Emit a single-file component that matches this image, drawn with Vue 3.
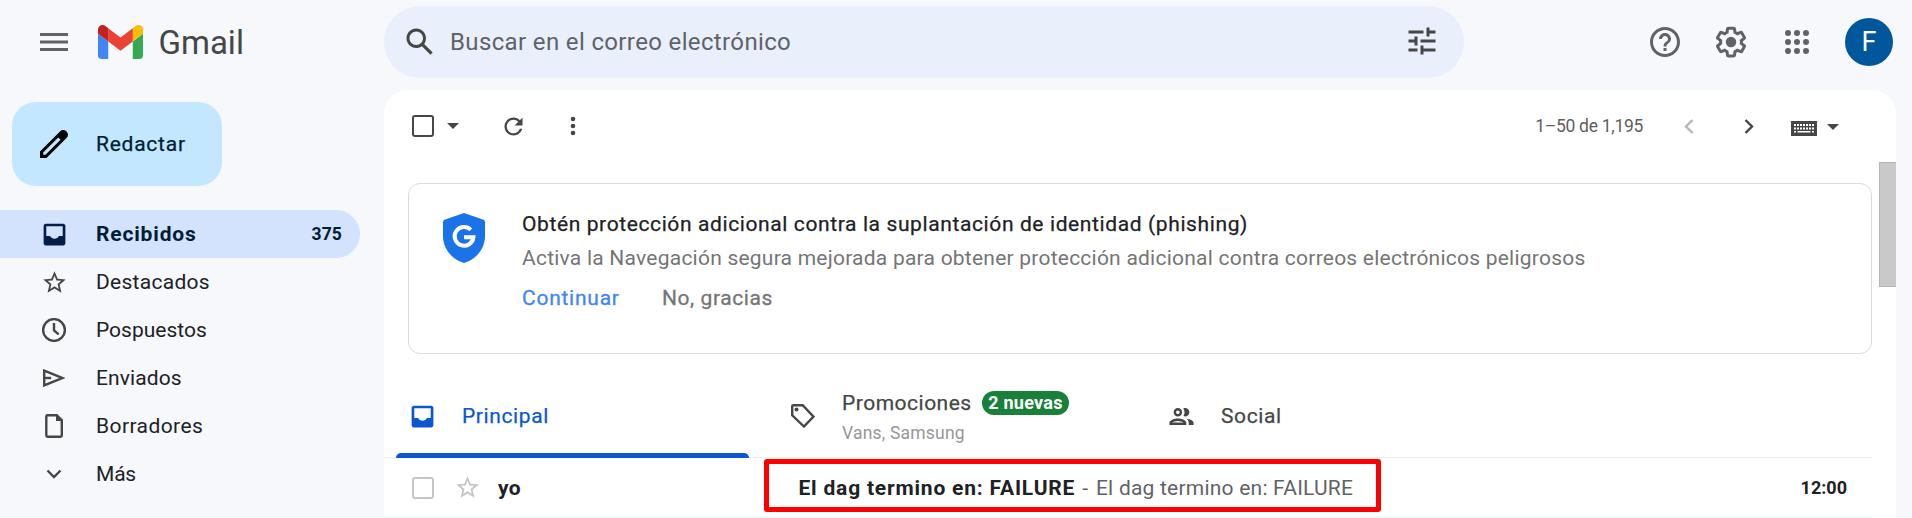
<script setup>
const navItems = [
  { id: 'starred', label: 'Destacados' },
  { id: 'snoozed', label: 'Pospuestos' },
  { id: 'sent', label: 'Enviados' },
  { id: 'drafts', label: 'Borradores' },
  { id: 'more', label: 'Más' },
]
const star = 'M22 9.24l-7.19-.62L12 2 9.19 8.63 2 9.24l5.46 4.73L5.82 21 12 17.27 18.18 21l-1.63-7.03L22 9.24zM12 15.4l-3.76 2.27 1-4.28-3.32-2.88 4.38-.38L12 6.1l1.71 4.04 4.38.38-3.32 2.88 1 4.28L12 15.4z'
const inbox = 'M4.8 3h14.4C20.2 3 21 3.8 21 4.8v14.4c0 1-.8 1.8-1.8 1.8H4.8C3.8 21 3 20.2 3 19.2V4.8C3 3.8 3.8 3 4.8 3zM5.2 5.2v8h3.2c.7 1.4 2 2.3 3.6 2.3s2.9-.9 3.6-2.3h3.2v-8z'
const dots = [4, 13, 22]
const keyRows = [
  { y: 3, xs: [3, 6, 9, 12, 15, 18, 21] },
  { y: 6.5, xs: [3, 6, 9, 12, 15, 18, 21] },
]
</script>

<template>
  <div class="app">
    <header class="header">
      <div class="brand">
        <svg class="menu" width="28" height="18"><path d="M0 0h28v3H0zM0 7.500h28v3H0zM0 15h28v3H0z" /></svg>
        <svg class="logo" width="45" height="34" viewBox="52 42 88 66">
          <path fill="#4285f4" d="M58 108h14V74L52 59v43c0 3.320 2.690 6 6 6" />
          <path fill="#34a853" d="M120 108h14c3.320 0 6-2.690 6-6V59l-20 15" />
          <path fill="#fbbc04" d="M120 48v26l20-15v-8c0-7.420-8.470-11.650-14.400-7.200" />
          <path fill="#ea4335" d="M72 74V48l24 18 24-18v26L96 92" />
          <path fill="#c5221f" d="M52 51v8l20 15V48l-5.600-4.200c-5.940-4.450-14.400-.22-14.400 7.200" />
        </svg>
        <span class="brand-name">Gmail</span>
      </div>
      <div class="search">
        <svg width="36" height="36" viewBox="0 0 24 24"><path d="M20.490 19l-5.730-5.730C15.530 12.200 16 10.910 16 9.500 16 5.910 13.090 3 9.500 3S3 5.910 3 9.500 5.910 16 9.500 16c1.410 0 2.700-.47 3.770-1.240L19 20.490zM5 9.500C5 7.010 7.010 5 9.500 5S14 7.010 14 9.500 11.990 14 9.500 14 5 11.990 5 9.500z" /></svg>
        <span class="search-text">Buscar en el correo electrónico</span>
        <svg class="tune" width="36" height="36" viewBox="0 0 24 24"><path d="M3 17v2h6v-2H3zM3 5v2h10V5H3zm10 16v-2h8v-2h-8v-2h-2v6h2zM7 9v2H3v2h4v2h2V9H7zm14 4v-2H11v2h10zm-6-4h2V7h4V5h-4V3h-2v6z" /></svg>
      </div>
      <div class="tools">
        <svg width="36" height="36" viewBox="0 0 24 24"><path d="M11 18h2v-2h-2v2zm1-16C6.480 2 2 6.480 2 12s4.480 10 10 10 10-4.480 10-10S17.520 2 12 2zm0 18c-4.410 0-8-3.590-8-8s3.590-8 8-8 8 3.590 8 8-3.590 8-8 8zm0-14c-2.210 0-4 1.790-4 4h2c0-1.100.9-2 2-2s2 .9 2 2c0 2-3 1.750-3 5h2c0-2.250 3-2.500 3-5 0-2.210-1.790-4-4-4z" /></svg>
        <svg width="36" height="36" viewBox="0 0 24 24"><path d="M13.850 22.250h-3.700c-.74 0-1.360-.54-1.450-1.270l-.27-1.890c-.27-.14-.53-.29-.79-.46l-1.800.72c-.7.26-1.470-.03-1.810-.65L2.200 15.530c-.35-.66-.2-1.440.36-1.880l1.530-1.190c-.01-.15-.02-.3-.02-.46 0-.15.01-.31.02-.46l-1.520-1.190c-.59-.45-.74-1.260-.37-1.880l1.850-3.190c.34-.62 1.110-.9 1.790-.63l1.810.73c.26-.17.52-.32.78-.46l.27-1.910c.09-.7.71-1.250 1.440-1.250h3.700c.74 0 1.360.54 1.450 1.270l.27 1.890c.27.14.53.29.79.46l1.800-.72c.71-.26 1.480.03 1.820.65l1.840 3.180c.36.66.2 1.440-.36 1.880l-1.520 1.190c.01.15.02.3.02.46s-.01.31-.02.46l1.520 1.190c.56.45.72 1.230.37 1.860l-1.860 3.220c-.34.62-1.110.9-1.800.63l-1.800-.72c-.26.17-.52.32-.78.46l-.27 1.910c-.1.68-.72 1.220-1.460 1.220zm-3.230-2h2.760l.37-2.550.53-.22c.44-.18.88-.44 1.340-.78l.45-.34 2.380.96 1.380-2.400-2.030-1.580.07-.56c.03-.26.06-.51.06-.78s-.03-.53-.06-.78l-.07-.56 2.030-1.580-1.390-2.400-2.390.96-.45-.35c-.42-.32-.87-.58-1.330-.77l-.52-.22-.37-2.550h-2.760l-.37 2.550-.53.21c-.44.19-.88.44-1.340.79l-.45.33-2.380-.95-1.390 2.390 2.030 1.580-.07.56a7 7 0 0 0-.06.79c0 .26.02.53.06.78l.07.56-2.030 1.580 1.380 2.400 2.390-.96.45.35c.43.33.86.58 1.330.77l.53.22.38 2.550z" /><circle cx="12" cy="12" r="3.500" /></svg>
        <svg width="26" height="26"><template v-for="y in dots" :key="y"><circle v-for="x in dots" :key="x" :cx="x" :cy="y" r="3" /></template></svg>
        <span class="avatar">F</span>
      </div>
    </header>

    <div class="body">
      <aside class="sidebar">
        <button class="compose">
          <svg width="28" height="28" viewBox="0 0 28 28"><path fill-rule="evenodd" d="M0 21.500 20 1.500a4.300 4.300 0 0 1 6.500 0 4.300 4.300 0 0 1 0 6.500L6.500 28H0zM3.200 22.500v2.300h2.300L20.600 9.800l-2.400-2.400z" /></svg>
          <span>Redactar</span>
        </button>
        <nav>
          <a class="nav-item active">
            <svg width="29" height="29" viewBox="0 0 24 24"><path fill-rule="evenodd" :d="inbox" /></svg>
            <span class="nav-label">Recibidos</span>
            <span class="count">375</span>
          </a>
          <a v-for="item in navItems" :key="item.id" class="nav-item">
            <svg v-if="item.id === 'starred'" width="27" height="27" viewBox="0 0 24 24"><path :d="star" /></svg>
            <svg v-else-if="item.id === 'snoozed'" class="line" width="24" height="24"><circle cx="12" cy="12" r="10.900" /><path d="M12 5v7.500l4.700 3.900" /></svg>
            <svg v-else-if="item.id === 'sent'" class="line" width="22" height="18"><path d="M1.200 1.600 19.200 9 1.200 16.400z" /><path d="M1.200 9h7" /></svg>
            <svg v-else-if="item.id === 'drafts'" class="line" width="18" height="24"><path d="M2.500 1.200h9.300l5 5v15.400q0 1.200-1.200 1.200h-13q-1.300 0-1.300-1.200V2.400q0-1.200 1.200-1.200z" /><path class="solid" d="M11 1l6 6h-6z" /></svg>
            <svg v-else class="line" width="16" height="10"><path d="M1.500 1.500 8 8l6.500-6.500" /></svg>
            <span class="nav-label" :class="item.id">{{ item.label }}</span>
          </a>
        </nav>
      </aside>

      <main class="main">
        <div class="toolbar">
          <span class="check"></span>
          <svg class="caret" width="12" height="6"><path d="M0 0h12L6 6z" /></svg>
          <svg class="refresh" width="27" height="27" viewBox="0 0 24 24"><path d="M17.650 6.350C16.200 4.900 14.210 4 12 4c-4.420 0-7.990 3.580-7.990 8s3.570 8 7.990 8c3.730 0 6.840-2.550 7.730-6h-2.080c-.82 2.330-3.040 4-5.650 4-3.310 0-6-2.690-6-6s2.690-6 6-6c1.660 0 3.140.69 4.220 1.780L13 11h7V4l-2.350 2.350z" /></svg>
          <svg class="dots" width="6" height="20"><circle cx="3" cy="3" r="2.300" /><circle cx="3" cy="10" r="2.300" /><circle cx="3" cy="17" r="2.300" /></svg>
          <span class="range">1–50 de 1,195</span>
          <svg class="line prev" width="10" height="15"><path d="M8.500 1 2 7.500 8.500 14" /></svg>
          <svg class="line next" width="10" height="15"><path d="M1.500 1 8 7.500 1.500 14" /></svg>
          <svg class="keyboard" width="26" height="15">
            <path d="M0 0h26v15H0z" />
            <g fill="#fff"><template v-for="row in keyRows" :key="row.y"><rect v-for="x in row.xs" :key="x" :x="x" :y="row.y" width="2" height="2" /></template><path d="M3 10h2v1.500H3zM6.500 10h13v1.500h-13zM21 10h2v1.500h-2z" /></g>
          </svg>
          <svg class="caret kb-caret" width="12" height="6"><path d="M0 0h12L6 6z" /></svg>
        </div>

        <div class="list">
          <div class="content">
            <section class="banner">
              <svg class="shield" width="42" height="50" viewBox="0 0 42 50">
                <path fill="#1a73e8" d="M21 0 40.500 6.800Q42 7.400 42 9V23c0 13-9 23.500-21 27C9 46.500 0 36 0 23V9Q0 7.400 1.500 6.800z" />
                <path fill="none" stroke="#fff" stroke-width="4" d="M27.800 16.800A9.400 9.400 0 1 0 30.400 24.200H21" />
              </svg>
              <div>
                <div class="banner-title">Obtén protección adicional contra la suplantación de identidad (phishing)</div>
                <div class="banner-text">Activa la Navegación segura mejorada para obtener protección adicional contra correos electrónicos peligrosos</div>
                <div class="banner-actions"><a class="go">Continuar</a><a class="no">No, gracias</a></div>
              </div>
            </section>

            <div class="tabs">
              <div class="tab selected">
                <svg width="29" height="29" viewBox="0 0 24 24"><path fill-rule="evenodd" :d="inbox" /></svg>
                <span class="tab-name">Principal</span>
              </div>
              <div class="tab promos">
                <svg class="line" width="24" height="24"><path d="M2.400 1.200h9.300L22.500 12.600 13 22.500 1.200 11.300V2.400q0-1.200 1.200-1.200z" /><circle class="solid" cx="5.500" cy="5.500" r="2" /></svg>
                <div>
                  <div class="promo-line"><span class="tab-name">Promociones</span><span class="badge">2 nuevas</span></div>
                  <div class="senders">Vans, Samsung</div>
                </div>
              </div>
              <div class="tab social">
                <svg width="29" height="29" viewBox="0 0 24 24"><path d="M9 13.750c-2.340 0-7 1.170-7 3.500V19h14v-1.750c0-2.330-4.660-3.500-7-3.500zM4.340 17c.84-.58 2.870-1.250 4.660-1.250s3.820.67 4.660 1.250H4.340zM9 12c1.930 0 3.500-1.570 3.500-3.500S10.930 5 9 5 5.500 6.570 5.500 8.500 7.070 12 9 12zm0-5c.83 0 1.500.67 1.500 1.500S9.830 10 9 10s-1.500-.67-1.500-1.500S8.170 7 9 7zm7.040 6.810c1.160.84 1.960 1.960 1.960 3.440V19h4v-1.750c0-2.020-3.500-3.170-5.960-3.440zM15 12c1.930 0 3.500-1.570 3.500-3.500S16.930 5 15 5c-.54 0-1.040.13-1.500.35.63.89 1 1.980 1 3.150s-.37 2.260-1 3.150c.46.22.96.35 1.500.35z" /></svg>
                <span class="tab-name">Social</span>
              </div>
            </div>

            <div class="row">
              <span class="check light"></span>
              <svg class="row-star" width="27" height="27" viewBox="0 0 24 24"><path :d="star" /></svg>
              <span class="sender">yo</span>
              <div class="highlight">
                <b>El dag termino en: FAILURE</b><span class="dash">-</span><span class="snippet">El dag termino en: FAILURE</span>
              </div>
              <span class="time">12:00</span>
            </div>
          </div>
          <div class="thumb"></div>
        </div>
      </main>
    </div>
  </div>
</template>

<style>
html, body { margin: 0; overflow: hidden; }
</style>

<style scoped>
.app { width: 1912px; height: 518px; overflow: hidden; display: flex; flex-direction: column; background: #f6f8fc; font-family: Roboto, "Liberation Sans", sans-serif; font-size: 21px; color: #202124; white-space: nowrap; }
.app * { box-sizing: border-box; }
svg { display: block; flex: none; fill: #444746; }
.line { fill: none; stroke: #444746; stroke-width: 2.4; }
.solid { fill: #444746; stroke: none; }

.header { height: 90px; flex: none; display: flex; padding-top: 6px; }
.brand { width: 384px; height: 72px; display: flex; align-items: center; padding-left: 40px; }
.menu { fill: #5f6368; }
.logo { margin-left: 29.5px; }
.brand-name { margin-left: 16px; font-size: 33px; color: #444746; }
.search { width: 1080px; height: 72px; border-radius: 36px; background: #e9f0fb; display: flex; align-items: center; padding: 0 24px 0 18px; }
.search-text { margin-left: 12px; font-size: 24px; letter-spacing: .36px; color: #5f6368; }
.tune { margin: -2px 0 0 auto; }
.tools { height: 72px; display: flex; align-items: center; margin-left: 183px; gap: 30px; }
.tools svg { fill: #5f6368; }
.tools svg:nth-child(3) { margin-left: 5px; }
.avatar { width: 48px; height: 48px; margin-left: 5px; border-radius: 50%; background: #01579b; color: #fff; font-size: 27px; line-height: 49px; text-align: center; }

.body { flex: 1; min-height: 0; display: flex; }
.sidebar { width: 384px; flex: none; padding-top: 12px; }
.compose { width: 210px; height: 84px; margin: 0 0 24px 12px; padding: 0 0 0 28px; border: 0; border-radius: 24px; background: #c2e7ff; display: flex; align-items: center; font: inherit; color: #001d35; letter-spacing: .75px; }
.compose span { margin-left: 28px; -webkit-text-stroke: .25px; }
.compose svg { fill: #000; }
.nav-item { width: 360px; height: 48px; display: grid; grid-template-columns: 108px 1fr auto; align-items: center; }
.nav-item svg { justify-self: center; }
.nav-label { margin-left: -12px; letter-spacing: .28px; }
.snoozed { letter-spacing: 0; }
.sent { letter-spacing: .1px; }
.drafts { letter-spacing: .42px; }
.more { letter-spacing: -.2px; }
.active { border-radius: 0 24px 24px 0; background: #d3e3fd; color: #001d35; font-weight: 700; }
.active svg { fill: #041e49; }
.active .nav-label { letter-spacing: .83px; }
.count { margin-right: 18px; font-size: 17.5px; letter-spacing: .1px; }

.main { width: 1512px; flex: none; border-radius: 24px 24px 0 0; background: #fff; display: flex; flex-direction: column; }
.toolbar { height: 72px; flex: none; display: flex; align-items: center; padding-left: 28px; }
.check { width: 22px; height: 22px; border: 2.5px solid #444746; border-radius: 3px; }
.caret { margin-left: 13px; }
.refresh { margin-left: 40.5px; }
.dots { margin-left: 43.5px; }
.range { margin-left: auto; font-size: 17.5px; letter-spacing: -.3px; color: #5e5e5e; }
.prev { margin-left: 41px; stroke: #b4b5b5; }
.next { margin-left: 50px; }
.keyboard { margin: 5px 0 0 37px; }
.kb-caret { margin: 2px 57px 0 10px; }

.list { flex: 1; min-height: 0; display: flex; }
.content { width: 1488px; }
.banner { width: 1464px; height: 171px; margin: 21px 0 0 24px; border: 1px solid #dadce0; border-radius: 12px; display: flex; padding: 29px 0 0 33.5px; }
.shield { margin-right: 36.5px; }
.banner-title { height: 34px; line-height: 24px; margin-top: -1px; margin-left: 1px; letter-spacing: .61px; -webkit-text-stroke: .25px; }
.banner-text { height: 40px; line-height: 24px; margin-left: 1px; letter-spacing: .23px; color: #757575; }
.banner-actions { line-height: 24px; display: flex; margin-left: 1px; -webkit-text-stroke: .3px; }
.go { width: 140px; color: #4285f4; letter-spacing: .75px; }
.no { color: #757575; letter-spacing: .57px; }

.tabs { height: 84px; margin-top: 20px; display: flex; border-bottom: 1px solid #eceff1; padding-left: 12px; color: #444746; }
.tab { height: 84px; display: flex; align-items: center; }
.tab-name { letter-spacing: .6px; -webkit-text-stroke: .25px; }
.selected { width: 353px; padding-left: 12px; color: #0b57d0; position: relative; }
.selected::after { content: ""; position: absolute; left: 0; right: 0; bottom: 0; height: 5px; background: #0b57d0; border-radius: 5px 5px 0 0; }
.selected svg { fill: #0b57d0; }
.selected .tab-name { margin-left: 25px; }
.promos { width: 418px; padding-left: 42px; }
.promos > div { margin-left: 27px; }
.promos .tab-name { letter-spacing: .5px; }
.promo-line { height: 24px; margin-top: 4px; display: flex; align-items: center; }
.badge { height: 24px; margin-left: 10.5px; padding: 0 6px; border-radius: 12px; background: #188038; color: #fff; font-size: 18px; font-weight: 700; line-height: 24px; letter-spacing: .26px; }
.senders { margin-top: 6px; font-size: 17.5px; line-height: 24px; letter-spacing: .2px; color: #969798; }
.social .tab-name { margin-left: 25px; }

.row { width: 1488px; height: 60px; display: flex; align-items: center; padding: 0 25px 0 28px; border-bottom: 1px solid #eceff1; }
.light { border-color: #c4c5c5; }
.row-star { margin-left: 20px; fill: #c4c5c5; }
.sender { width: 266px; margin-left: 17px; font-weight: 700; letter-spacing: .4px; }
.highlight { width: 617px; height: 53px; border: 5px solid #f00; border-radius: 3px; display: flex; align-items: center; padding: 4px 0 0 29.5px; margin-top: -4px; }
.highlight b { letter-spacing: .8px; }
.dash { margin: 0 8px 0 7px; color: #5f6368; }
.snippet { color: #5f6368; letter-spacing: .22px; }
.time { margin-left: auto; font-size: 18px; font-weight: 700; }
.thumb { width: 17px; height: 125px; margin-left: 7px; flex: none; background: #c9c9c9; border: solid #b5b5b5; border-width: 1px 0 1px 1px; }
</style>
